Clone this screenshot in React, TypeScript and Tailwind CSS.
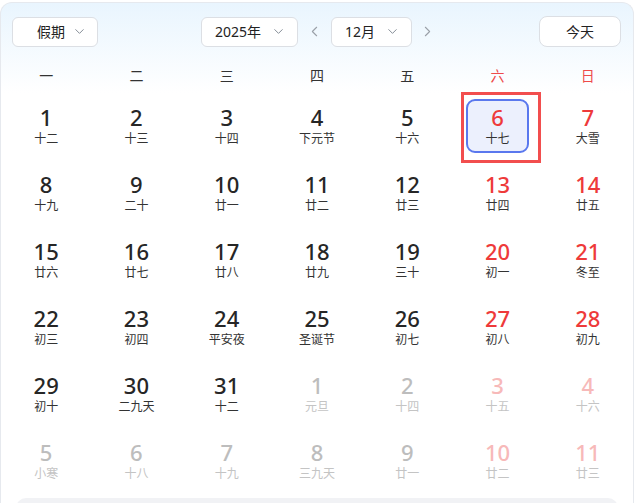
import React from "react";
import { ChevronDown, ChevronLeft, ChevronRight } from "lucide-react";

type Day = { d: number; l: string; muted?: boolean };

const weekdays = ["一", "二", "三", "四", "五", "六", "日"];

const rows: Day[][] = [
  [
    { d: 1, l: "十二" }, { d: 2, l: "十三" }, { d: 3, l: "十四" }, { d: 4, l: "下元节" },
    { d: 5, l: "十六" }, { d: 6, l: "十七" }, { d: 7, l: "大雪" },
  ],
  [
    { d: 8, l: "十九" }, { d: 9, l: "二十" }, { d: 10, l: "廿一" }, { d: 11, l: "廿二" },
    { d: 12, l: "廿三" }, { d: 13, l: "廿四" }, { d: 14, l: "廿五" },
  ],
  [
    { d: 15, l: "廿六" }, { d: 16, l: "廿七" }, { d: 17, l: "廿八" }, { d: 18, l: "廿九" },
    { d: 19, l: "三十" }, { d: 20, l: "初一" }, { d: 21, l: "冬至" },
  ],
  [
    { d: 22, l: "初三" }, { d: 23, l: "初四" }, { d: 24, l: "平安夜" }, { d: 25, l: "圣诞节" },
    { d: 26, l: "初七" }, { d: 27, l: "初八" }, { d: 28, l: "初九" },
  ],
  [
    { d: 29, l: "初十" }, { d: 30, l: "二九天" }, { d: 31, l: "十二" },
    { d: 1, l: "元旦", muted: true }, { d: 2, l: "十四", muted: true },
    { d: 3, l: "十五", muted: true }, { d: 4, l: "十六", muted: true },
  ],
  [
    { d: 5, l: "小寒", muted: true }, { d: 6, l: "十八", muted: true }, { d: 7, l: "十九", muted: true },
    { d: 8, l: "三九天", muted: true }, { d: 9, l: "廿一", muted: true },
    { d: 10, l: "廿二", muted: true }, { d: 11, l: "廿三", muted: true },
  ],
];

const DayCell = ({ day, weekend, selected }: { day: Day; weekend: boolean; selected: boolean }) => {
  let numColor = "text-[#262626]";
  let lunarColor = "text-[#333333]";
  if (weekend) numColor = "text-[#ee3a3a]";
  if (day.muted) {
    numColor = weekend ? "text-[#f7b9b9]" : "text-[#bdbdbd]";
    lunarColor = "text-[#c4c4c4]";
  }

  const content = (
    <div className="flex flex-col items-center">
      <span className={`text-[22px] leading-[24px] font-medium ${numColor}`}>{day.d}</span>
      <span className={`text-[12px] leading-[15px] mt-[2px] ${lunarColor}`}>{day.l}</span>
    </div>
  );

  return (
    <div className="relative h-[67px] flex items-center justify-center">
      {selected ? (
        <>
          <div className="w-[63px] h-[54px] rounded-[9px] border-2 border-[#5a78ee] bg-[#ecf0fd] flex items-center justify-center">
            {content}
          </div>
          <div className="absolute left-[9px] top-0 w-[80px] h-[71px] border-[3px] border-[#f24e4e]" />
        </>
      ) : (
        content
      )}
    </div>
  );
};

export default function App() {
  return (
    <div className="w-[640px] h-[503px] bg-white overflow-hidden pt-[2px] font-['Noto_Sans','Noto_Sans_CJK_SC',sans-serif]">
      <div className="w-[634px] rounded-t-[12px] border border-b-0 border-[#e6e9ee] bg-gradient-to-b from-[#e9f5fe] via-white to-white via-[90px]">
        {/* header */}
        <div className="flex items-center h-[31px] mt-[13px] pl-[11px] pr-[12px]">
          <div className="w-[86px] h-[30px] flex items-center justify-between pl-[24px] pr-[10px] bg-white border border-[#dcdfe4] rounded-[6px] text-[14px] text-[#222]">
            <span>假期</span>
            <ChevronDown size={15} strokeWidth={1.5} className="text-[#7d8590]" />
          </div>
          <div className="flex items-center ml-[103px]">
            <div className="w-[97px] h-[30px] flex items-center justify-between pl-[13px] pr-[11px] bg-white border border-[#dcdfe4] rounded-[6px] text-[14px] text-[#222]">
              <span>2025年</span>
              <ChevronDown size={15} strokeWidth={1.5} className="text-[#7d8590]" />
            </div>
            <div className="w-[33px] flex justify-center">
              <ChevronLeft size={17} strokeWidth={1.5} className="text-[#9aa0a8]" />
            </div>
            <div className="w-[81px] h-[30px] flex items-center justify-between pl-[13px] pr-[11px] bg-white border border-[#dcdfe4] rounded-[6px] text-[14px] text-[#222]">
              <span>12月</span>
              <ChevronDown size={15} strokeWidth={1.5} className="text-[#7d8590]" />
            </div>
            <div className="w-[30px] flex justify-center">
              <ChevronRight size={17} strokeWidth={1.5} className="text-[#9aa0a8]" />
            </div>
          </div>
          <button className="ml-auto w-[82px] h-[31px] bg-white border border-[#dcdfe4] rounded-[8px] text-[14px] text-[#222]">
            今天
          </button>
        </div>

        {/* weekdays */}
        <div className="grid grid-cols-7 h-[30px] mt-[13px] items-center">
          {weekdays.map((w, i) => (
            <div
              key={w}
              className={`text-center text-[14px] ${i >= 5 ? "text-[#ee4a4a]" : "text-[#333]"}`}
            >
              {w}
            </div>
          ))}
        </div>

        {/* days */}
        <div className="grid grid-cols-7 mt-[2px]">
          {rows.map((row, r) =>
            row.map((day, i) => (
              <DayCell
                key={`${r}-${i}`}
                day={day}
                weekend={i >= 5}
                selected={r === 0 && i === 5}
              />
            ))
          )}
        </div>

        <div className="mx-[15px] mt-[4px] h-[10px] rounded-t-[10px] bg-[#f1f2f5]" />
      </div>
    </div>
  );
}
